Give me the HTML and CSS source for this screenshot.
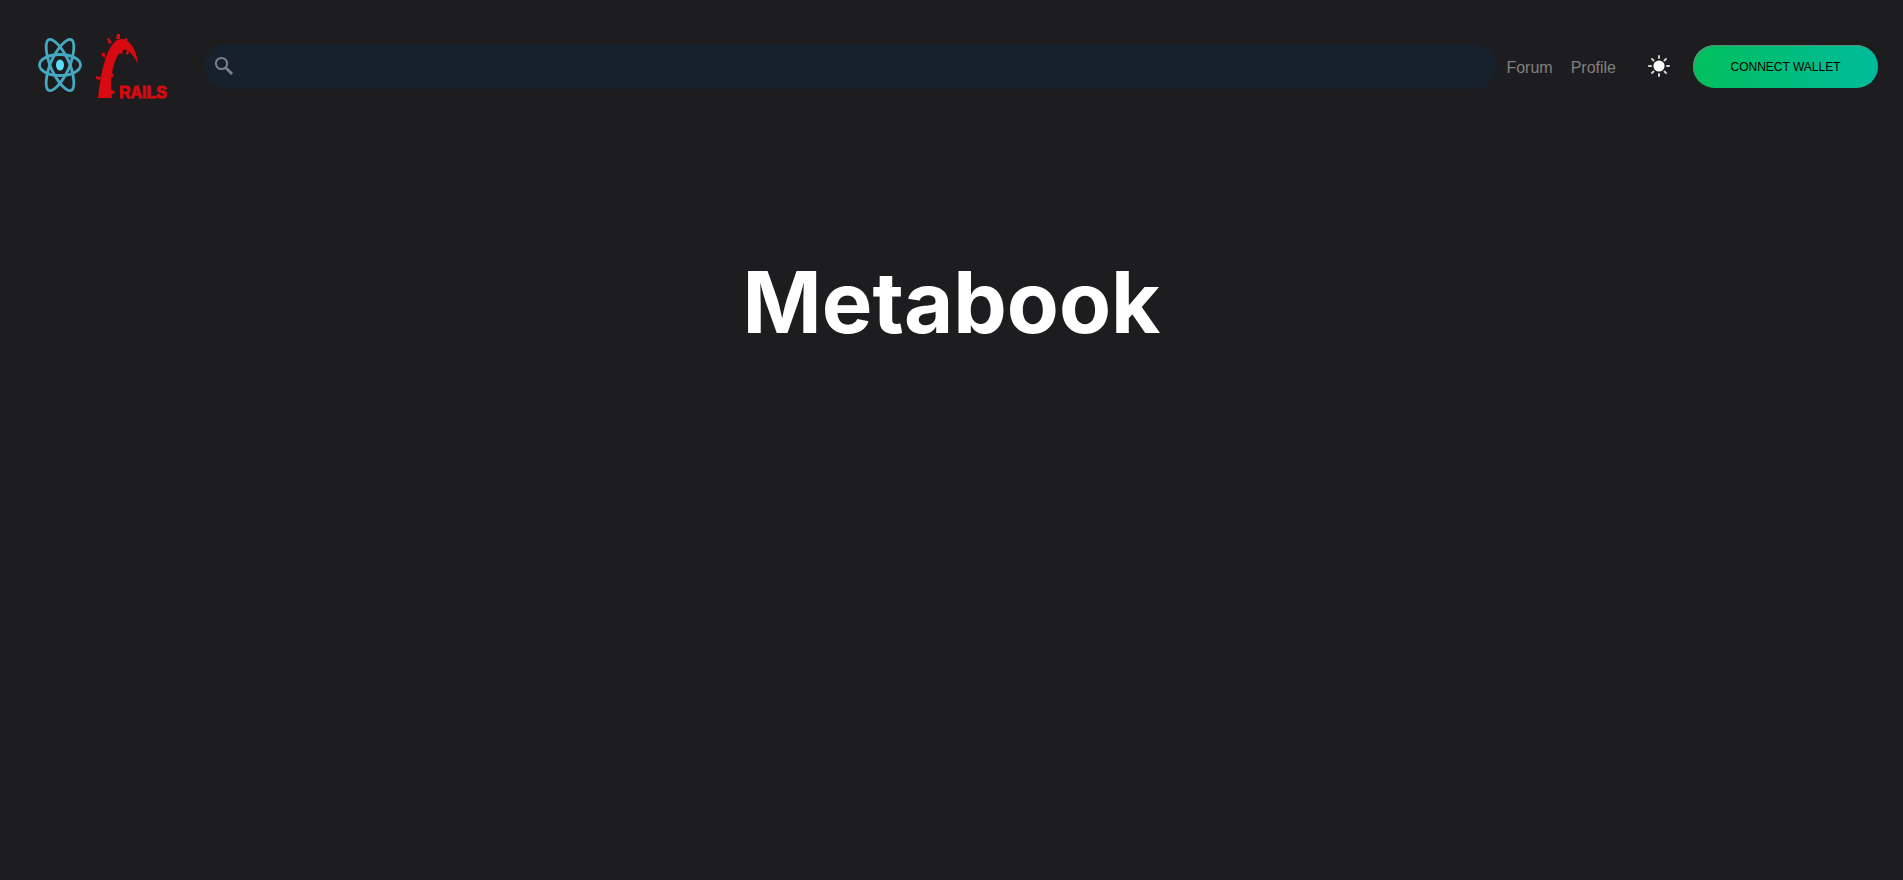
FILE: index.html
```html
<!DOCTYPE html>
<html lang="en">
<head>
<meta charset="utf-8">
<meta name="viewport" content="width=device-width, initial-scale=1">
<title>Metabook</title>
<link rel="stylesheet" href="styles.css">
</head>
<body>
<header class="navbar">
  <a class="brand" href="#" aria-label="Home">
    <svg class="logo-react" viewBox="0 0 44 56" aria-hidden="true">
      <g fill="none" stroke="#46a9c3" stroke-width="2.800">
        <ellipse cx="22" cy="27" rx="20.500" ry="10.500"/>
        <path d="M10 2C14 -1 22 7 28 18C35 30 38 48 34 52C30 55 22 47 16 36C9 24 6 6 10 2Z"/>
        <path d="M34 2C30 -1 22 7 16 18C9 30 6 48 10 52C14 55 22 47 28 36C35 24 38 6 34 2Z"/>
      </g>
      <ellipse cx="22" cy="27" rx="4" ry="5.500" fill="#5bdcfb"/>
    </svg>
    <svg class="logo-rails" viewBox="0 0 74 70" aria-hidden="true">
      <g fill="#d60a10">
        <path class="soft" d="M2 67C4 49 7 31 13 19C18 9 24 6 30 9C37 13 41 23 42 33C37 23 32 18 27 19C18 25 13 46 16 67Z"/>
        <path class="soft" d="M21 3h3l0 5h-4zM11 8l2-1 3 5-3 1zM29 7l3 1-3 5-1-2zM6 22l3 0 0 5-3-2zM0 45l5 1-1 3-4-1zM15 59l4 1-1 3-3 0zM15 42l3 1-1 3-2 0zM24 19l3 1-1 3-3-1zM31 19l2 2-1 3-2-1z"/>
        <text class="logo-word" x="23" y="67">RAILS</text>
      </g>
    </svg>
  </a>
  <form class="search" role="search">
    <svg class="search-icon" viewBox="0 0 20 20" aria-hidden="true">
      <g fill="none" stroke="#7c7f8d" stroke-width="2">
        <circle cx="7.500" cy="7.500" r="5.600"/>
        <path d="M11.800 11.800L18 18" stroke-width="2.800"/>
      </g>
    </svg>
    <input class="search-input" type="search" aria-label="Search">
  </form>
  <nav class="links">
    <a class="link" href="#">Forum</a>
    <a class="link" href="#">Profile</a>
  </nav>
  <button class="theme" type="button" aria-label="Toggle theme">
    <svg class="theme-icon" viewBox="0 0 24 24" aria-hidden="true">
      <circle cx="12" cy="12" r="5.600" fill="#fff"/>
      <path d="M12 2v2M12 20v2M2 12h2M20 12h2M5 5l1.500 1.500M17.500 17.500l1.500 1.500M5 19l1.500-1.500M17.500 6.500l1.500-1.500" stroke="#cfcfcf" stroke-width="2" stroke-linecap="round"/>
    </svg>
  </button>
  <button class="wallet" type="button">CONNECT WALLET</button>
</header>
<main class="hero">
  <h1 class="title">Metabook</h1>
</main>
</body>
</html>
```
FILE: styles.css
```css
* {
  box-sizing: border-box;
}

body {
  margin: 0;
  min-height: 100vh;
  background: #1d1d1f;
  color: #fff;
  font-family: "Liberation Sans", Arial, sans-serif;
}

.navbar {
  display: flex;
  align-items: center;
  padding: 31px 25px 30px 38px;
}

.brand {
  display: flex;
  align-items: center;
  gap: 14px;
  margin-right: 34px;
}

.logo-react {
  width: 44px;
  height: 56px;
  overflow: visible;
  filter: blur(0.5px);
}

.logo-rails {
  width: 74px;
  height: 70px;
}

.soft {
  filter: blur(0.5px);
}

.logo-word {
  font: bold 16px "Liberation Sans", Arial, sans-serif;
  stroke: #d60a10;
  stroke-width: 1px;
}

.search {
  display: flex;
  flex: 1;
  align-items: center;
  height: 45px;
  padding: 0 20px 0 10px;
  border-radius: 23px;
  background: #17212b;
}

.search-icon {
  width: 20px;
  height: 20px;
}

.search-input {
  flex: 1;
  height: 100%;
  padding: 0 10px;
  border: 0;
  outline: 0;
  background: transparent;
  color: #ccc;
  font: inherit;
}

.links {
  display: flex;
  gap: 18px;
  margin-left: 9px;
  padding-top: 4px;
}

.link {
  color: #808080;
  font-size: 16px;
  line-height: 20px;
  text-decoration: none;
}

.theme {
  display: flex;
  margin: 0 22px 0 31px;
  padding: 0;
  border: 0;
  background: none;
}

.theme-icon {
  width: 24px;
  height: 24px;
}

.wallet {
  width: 185px;
  height: 43px;
  padding: 1px 0 0;
  border: 0;
  border-radius: 22px;
  background: linear-gradient(90deg, #00bf5c, #00bb9c);
  box-shadow: inset 1px 1px 0 #5f8f78;
  color: #000;
  font: 12px "Liberation Sans", Arial, sans-serif;
}

.hero {
  padding: 116px 20px 0;
}

.title {
  margin: 0;
  font: bold 85px/112px Inter, sans-serif;
  text-align: center;
}
```
